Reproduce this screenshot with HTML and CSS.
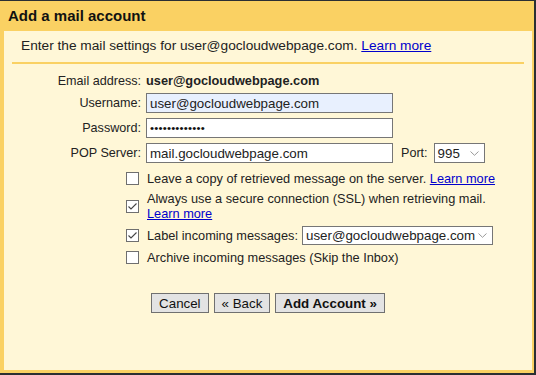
FILE: index.html
```html
<!DOCTYPE html>
<html lang="en">
<head>
    <meta charset="UTF-8">
    <title>Add a mail account</title>
    <link rel="stylesheet" href="styles.css">
</head>
<body>
    <div class="dialog">
        <div class="dialog-title">Add a mail account</div>
        <div class="dialog-body">
            <div class="intro">
                Enter the mail settings for user@gocloudwebpage.com. <a href="#">Learn more</a>
            </div>

            <div class="form">
                <label>Email address:</label>
                <span class="value">user@gocloudwebpage.com</span>

                <label>Username:</label>
                <div class="field"><span class="input autofill">user@gocloudwebpage.com</span></div>

                <label>Password:</label>
                <div class="field"><span class="input password">•••••••••••••</span></div>

                <label>POP Server:</label>
                <div class="field">
                    <span class="input">mail.gocloudwebpage.com</span>
                    <span class="port-label">Port:</span>
                    <span class="select port-select">
                        995
                        <svg class="chevron" viewBox="0 0 9 5" fill="none" stroke="#9a9a9a" stroke-width="1">
                            <polyline points="0.5,0.5 4.5,4.3 8.5,0.5"></polyline>
                        </svg>
                    </span>
                </div>
            </div>

            <div class="options">
                <div class="option">
                    <span class="checkbox"></span>
                    <span>Leave a copy of retrieved message on the server. <a href="#">Learn more</a></span>
                </div>
                <div class="option">
                    <span class="checkbox checked">
                        <svg viewBox="0 0 11 11" fill="none" stroke="#444" stroke-width="1.1">
                            <polyline points="1.5,5.5 4,8 9.5,2.5"></polyline>
                        </svg>
                    </span>
                    <span>Always use a secure connection (SSL) when retrieving mail.<br><a href="#">Learn more</a></span>
                </div>
                <div class="option">
                    <span class="checkbox checked">
                        <svg viewBox="0 0 11 11" fill="none" stroke="#444" stroke-width="1.1">
                            <polyline points="1.5,5.5 4,8 9.5,2.5"></polyline>
                        </svg>
                    </span>
                    <span>Label incoming messages:</span>
                    <span class="select label-select">
                        user@gocloudwebpage.com
                        <svg class="chevron" viewBox="0 0 9 5" fill="none" stroke="#9a9a9a" stroke-width="1">
                            <polyline points="0.5,0.5 4.5,4.3 8.5,0.5"></polyline>
                        </svg>
                    </span>
                </div>
                <div class="option">
                    <span class="checkbox"></span>
                    <span>Archive incoming messages (Skip the Inbox)</span>
                </div>
            </div>

            <div class="buttons">
                <button>Cancel</button>
                <button>« Back</button>
                <button class="primary">Add Account »</button>
            </div>
        </div>
    </div>
</body>
</html>
```

FILE: styles.css
```css
* {
    margin: 0;
    padding: 0;
    box-sizing: border-box;
}

body {
    font-family: "Liberation Sans", Arial, sans-serif;
    font-size: 13px;
    color: #222;
    background: #2b2f33;
    height: 100vh;
    overflow: hidden;
}

a {
    color: #0000cc;
}

/* Dialog frame */
.dialog {
    margin-top: 1px;
    width: 534px;
    height: 372px;
    background: #fad163;
    padding: 0 2px 3px 4px;
    display: flex;
    flex-direction: column;
}

.dialog-title {
    height: 30px;
    line-height: 30px;
    padding-left: 4px;
    font-size: 15px;
    font-weight: bold;
    color: #111;
}

.dialog-body {
    flex: 1;
    background: #fff7d7;
}

.intro {
    margin: 0 8px;
    padding: 6px 0 8px 9px;
    line-height: 17px;
    font-size: 13.7px;
    border-bottom: 2px solid #fad163;
}

/* Form rows */
.form {
    display: grid;
    grid-template-columns: 137px 1fr;
    grid-template-rows: 15px 20px 20px 20px;
    column-gap: 5px;
    row-gap: 5px;
    align-items: center;
    padding-top: 9px;
}

.form label {
    text-align: right;
    font-size: 12.6px;
}

.value {
    font-weight: bold;
    font-size: 12.75px;
}

.field {
    display: flex;
    align-items: center;
    font-size: 12.6px;
}

.input {
    display: flex;
    align-items: center;
    width: 247px;
    height: 20px;
    padding: 0 3px;
    border: 1px solid #767676;
    background: white;
    font-size: 13.33px;
}

.input.autofill {
    background: #e8f0fe;
}

.input.password {
    font-size: 11.5px;
    letter-spacing: 0.2px;
    color: #111;
}

.port-label {
    margin-left: 8px;
}

.select {
    display: flex;
    align-items: center;
    justify-content: space-between;
    height: 20px;
    padding: 0 5px 0 3px;
    border: 1px solid #767676;
    background: white;
    font-size: 13.33px;
}

.port-select {
    width: 51px;
    margin-left: 6px;
}

.label-select {
    width: 191px;
    height: 19px;
    margin-left: 4px;
}

.chevron {
    width: 9px;
    height: 5px;
}

/* Checkbox options */
.options {
    display: flex;
    flex-direction: column;
    gap: 5px;
    padding: 8px 0 0 122px;
}

.option {
    display: flex;
    align-items: center;
    line-height: 15px;
    font-size: 12.75px;
}

.checkbox {
    width: 13px;
    height: 13px;
    margin-right: 8px;
    border: 1px solid #6f6f6f;
    background: white;
    flex-shrink: 0;
    display: flex;
}

.checkbox svg {
    width: 11px;
    height: 11px;
}

/* Buttons */
.buttons {
    display: flex;
    justify-content: center;
    gap: 5px;
    margin-top: 28px;
}

button {
    height: 20px;
    padding: 0 7px;
    border: 1px solid #707070;
    background: #e3e3e3;
    font-family: "Liberation Sans", Arial, sans-serif;
    font-size: 13.33px;
    color: #111;
}

button.primary {
    font-weight: bold;
}
```
